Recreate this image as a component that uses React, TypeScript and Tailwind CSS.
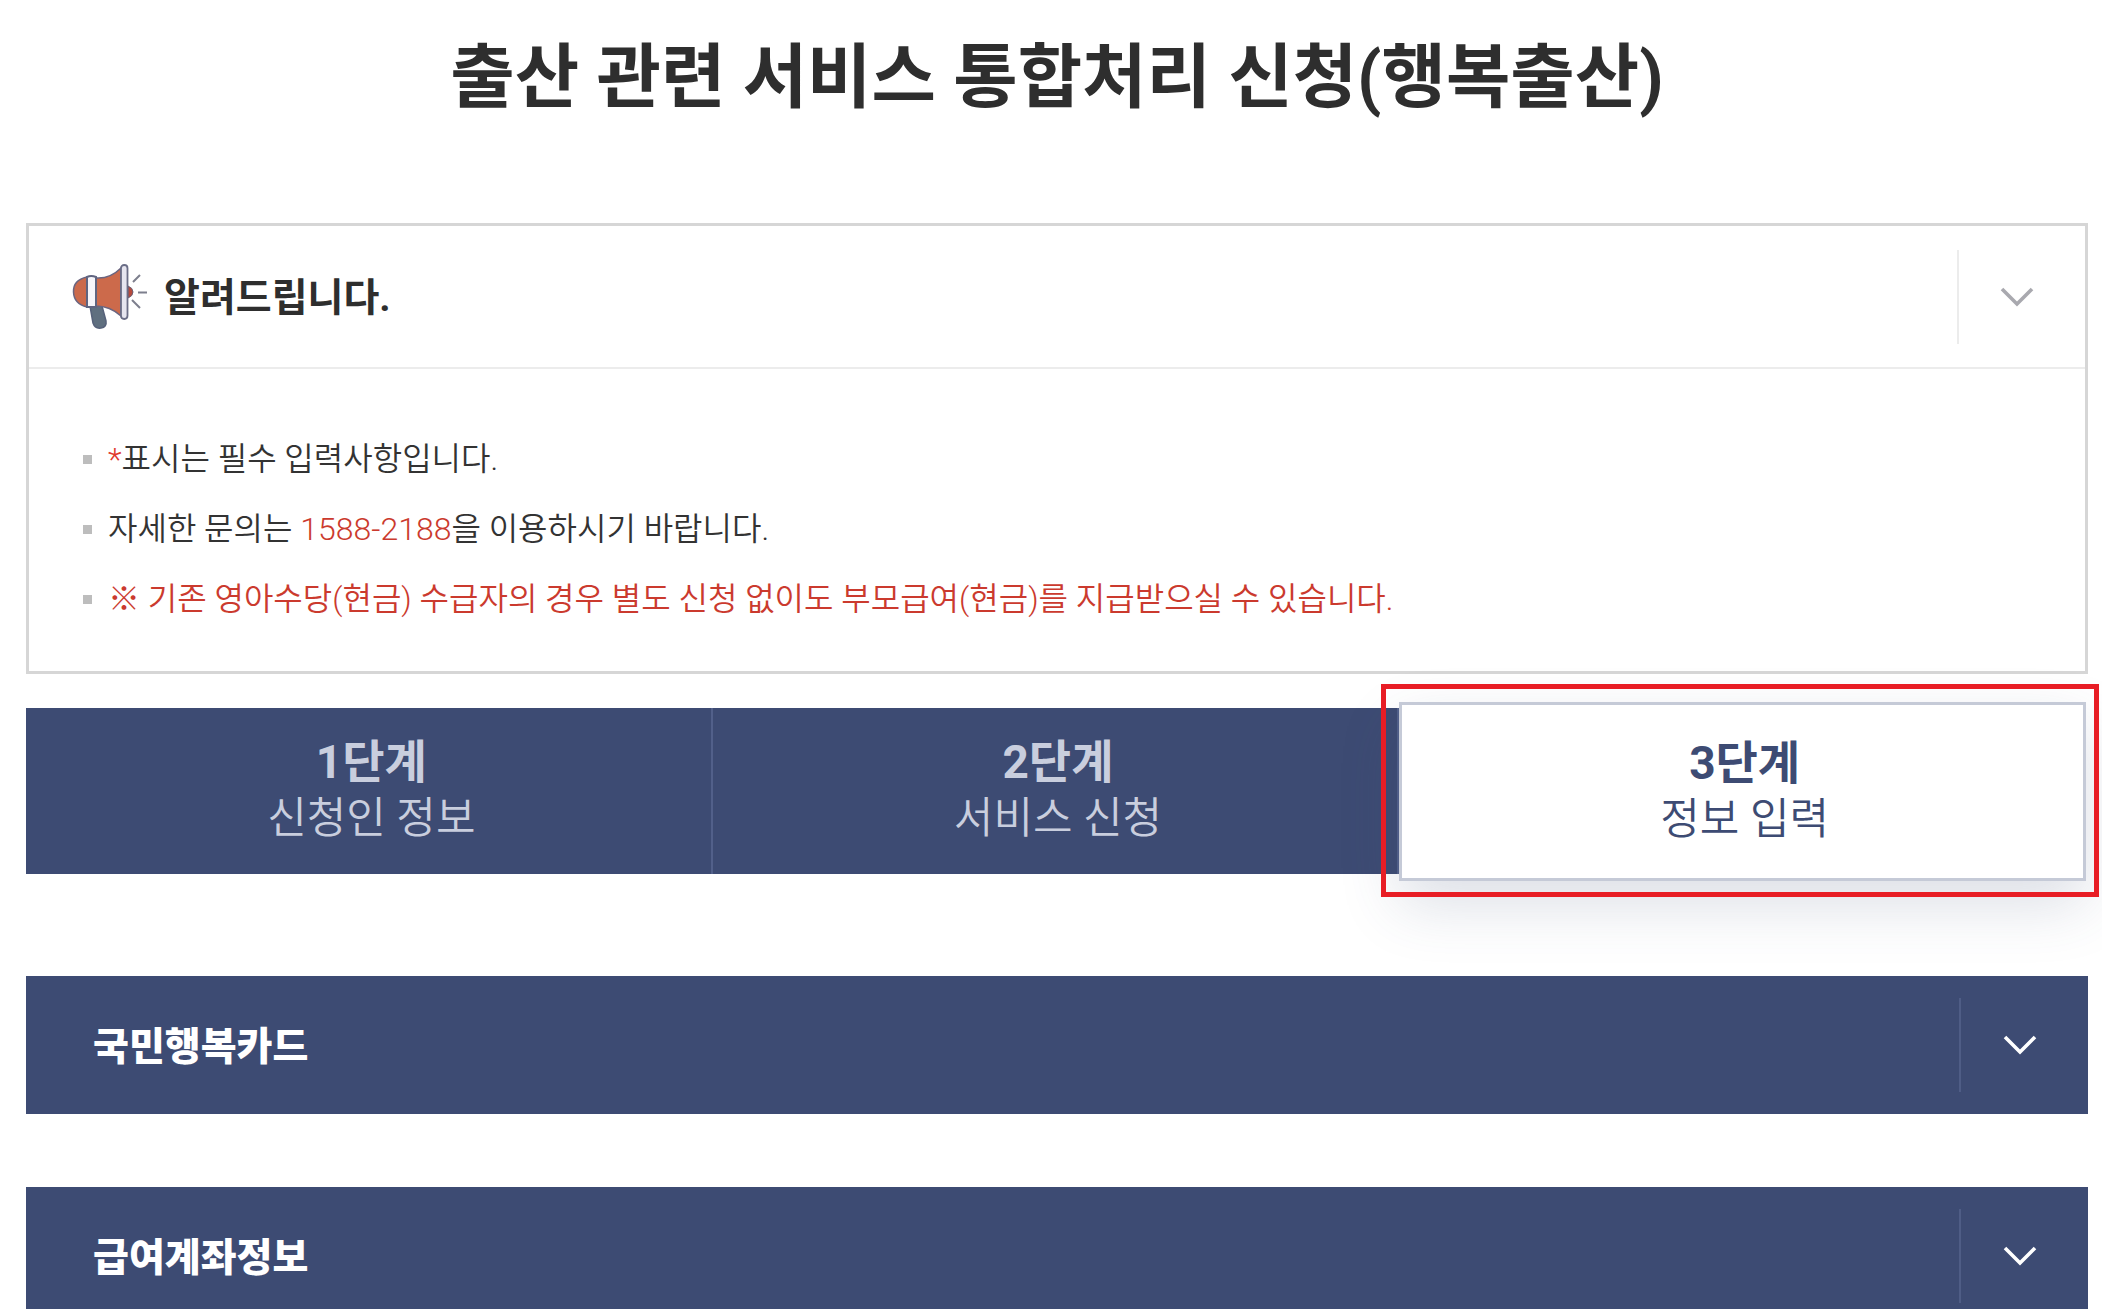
import React from "react";

function Chevron({ className }: { className: string }) {
  return (
    <svg
      className={className}
      viewBox="0 0 36 24"
      width="36"
      height="24"
      fill="none"
      stroke="currentColor"
      strokeWidth="3.6"
      aria-hidden="true"
    >
      <path d="M2 4 L17 19 L32 4" />
    </svg>
  );
}

function Megaphone() {
  return (
    <svg viewBox="0 0 76 66" width="76" height="66" aria-hidden="true" className="shrink-0">
      <path d="M18 42 L30 42 L34 57 Q35 63 29 64 Q23 65 21 59 Z" fill="#5f6f7f" stroke="#56617a" strokeWidth="1.5" />
      <path d="M56 22 Q61 24 61 28 Q61 32 56 34 Z" fill="#b84a3c" stroke="#6a5f74" strokeWidth="1" />
      <path d="M15 13 Q1 16 1.5 28 Q2 40 15 43 Z" fill="#cc6a4b" stroke="#6a6580" strokeWidth="1.5" />
      <path d="M24 14 Q38 15 49 4 L49 52 Q38 42 24 42 Z" fill="#cc6a4b" stroke="#6a6580" strokeWidth="1.5" />
      <path d="M15 13 Q19 11 24 13 L24 43 L15 43 Z" fill="#f6f5fa" stroke="#5f6480" strokeWidth="2" />
      <rect x="49" y="1" width="6.5" height="54" rx="3.2" fill="#e6e5ef" stroke="#6a6d86" strokeWidth="1.8" />
      <path d="M61 18 L68 11 M66 28.5 L75 28.5 M60 36 L68 44" stroke="#7d7f8d" strokeWidth="2" fill="none" />
    </svg>
  );
}

const steps = [
  { step: "1단계", label: "신청인 정보" },
  { step: "2단계", label: "서비스 신청" },
  { step: "3단계", label: "정보 입력" },
];

const sections = ["국민행복카드", "급여계좌정보"];

function Bullet({ children, red }: { children: React.ReactNode; red?: boolean }) {
  return (
    <li className="flex items-center gap-4">
      <span className="size-[9px] shrink-0 bg-[#bdbdbd]" />
      <span className={red ? "text-[#cb3a2e]" : "text-[#333]"}>{children}</span>
    </li>
  );
}

export default function App() {
  return (
    <main className="h-screen overflow-hidden bg-white pl-[26px] pr-[14px] font-[Roboto,'Noto_Sans_CJK_KR',sans-serif]">
      <h1 className="pt-7 text-center text-[70px] leading-[100px] font-bold text-[#2e2e2e]">
        출산 관련 서비스 통합처리 신청(행복출산)
      </h1>

      <section className="mt-[95px] border-[3px] border-[#d6d6d6]">
        <h2 className="border-b-2 border-[#ececec]">
          <button
            type="button"
            aria-expanded="true"
            className="flex h-[141px] w-full items-center pl-[43px] text-left text-[39px] font-bold text-[#2e2e2e]"
          >
            <Megaphone />
            <span className="ml-4 flex-1 pt-1">알려드립니다.</span>
            <span className="flex h-[94px] w-[128px] items-center justify-center border-l-2 border-[#ececec] pr-2">
              <Chevron className="text-[#a9a9af]" />
            </span>
          </button>
        </h2>
        <ul className="px-[54px] pt-[55px] pb-[37px] text-[32px] leading-[70px] font-[350]">
          <Bullet>
            <span className="text-[#e0392e]">*</span>표시는 필수 입력사항입니다.
          </Bullet>
          <Bullet>
            자세한 문의는 <span className="text-[#cb3a2e]">1588-2188</span>을 이용하시기 바랍니다.
          </Bullet>
          <Bullet red>
            ※ 기존 영아수당(현금) 수급자의 경우 별도 신청 없이도 부모급여(현금)를 지급받으실 수 있습니다.
          </Bullet>
        </ul>
      </section>

      <nav className="mt-[34px] grid grid-cols-3 pr-[2px]">
        {steps.map((s, i) => {
          const active = i === 2;
          return (
            <div key={s.step} className="relative">
              <button
                type="button"
                aria-current={active ? "step" : undefined}
                className={
                  active
                    ? "relative -my-[6px] flex h-[179px] w-full flex-col items-center justify-center border-[3px] border-[#c5cad7] bg-white pb-0.5 pl-1 text-[#3d4b73] shadow-[0_24px_60px_rgba(61,75,115,0.18)]"
                    : "flex h-[166px] w-full flex-col items-center justify-center border-r-2 border-[#52608a] bg-[#3d4b73] pb-0.5 pl-1.5 text-[#c9cede]"
                }
              >
                <span className="text-[46px] leading-[56px] font-bold">{s.step}</span>
                <span className="text-[43px] leading-[56px] font-[350]">{s.label}</span>
              </button>
              {active && (
                <span className="pointer-events-none absolute -top-6 -right-[13px] -bottom-[22px] -left-[18px] border-[5px] border-[#e81d25]" />
              )}
            </div>
          );
        })}
      </nav>

      <div className="mt-[101px] flex flex-col gap-[73px]">
        {sections.map((title) => (
          <h2 key={title}>
            <button
              type="button"
              aria-expanded="false"
              className="flex h-[138px] w-full items-center bg-[#3d4b73] pl-[67px] text-left text-[39px] font-black text-white"
            >
              <span className="flex-1 pt-1">{title}</span>
              <span className="flex h-[94px] w-[129px] items-center justify-center border-l-2 border-[#4f5d86] pr-2">
                <Chevron className="text-white" />
              </span>
            </button>
          </h2>
        ))}
      </div>
    </main>
  );
}
